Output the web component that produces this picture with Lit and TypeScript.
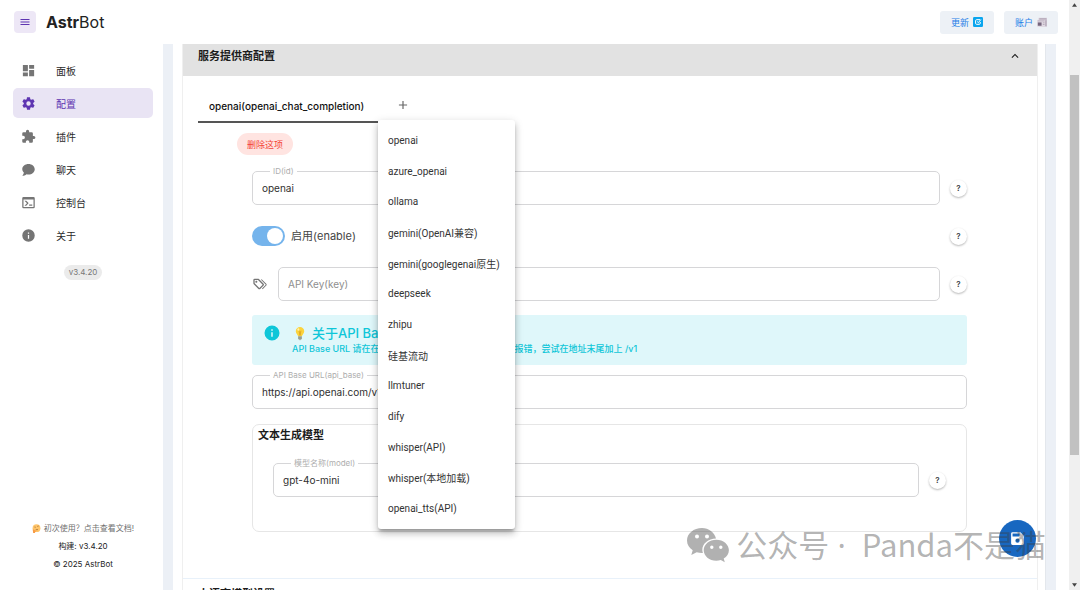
import { LitElement, html, css } from "lit";
import { customElement, property, state } from "lit/decorators.js";
import { classMap } from "lit/directives/class-map.js";

const icons = {
  menu: "M3 6h18v2H3zm0 5h18v2H3zm0 5h18v2H3z",
  dashboard: "M13 3v6h8V3m-8 18h8V11h-8M3 21h8v-6H3m0-2h8V3H3z",
  cog: "M12 15.5A3.5 3.5 0 0 1 8.5 12 3.5 3.5 0 0 1 12 8.5a3.5 3.5 0 0 1 3.5 3.5 3.5 3.5 0 0 1-3.5 3.5m7.43-2.53c.04-.32.07-.64.07-.97s-.03-.66-.07-1l2.11-1.63c.19-.15.24-.42.12-.64l-2-3.46c-.12-.22-.39-.31-.61-.22l-2.49 1c-.52-.39-1.06-.73-1.69-.98l-.37-2.65A.506.506 0 0 0 14 2h-4c-.25 0-.46.18-.5.42l-.37 2.65c-.63.25-1.17.59-1.69.98l-2.49-1c-.22-.09-.49 0-.61.22l-2 3.46c-.13.22-.07.49.12.64L4.57 11c-.04.34-.07.67-.07 1s.03.65.07.97l-2.11 1.66c-.19.15-.25.42-.12.64l2 3.46c.12.22.39.3.61.22l2.49-1.01c.52.4 1.06.74 1.69.99l.37 2.65c.04.24.25.42.5.42h4c.25 0 .46-.18.5-.42l.37-2.65c.63-.26 1.17-.59 1.69-.99l2.49 1.01c.22.08.49 0 .61-.22l2-3.46c.12-.22.07-.49-.12-.64z",
  puzzle: "M20.5 11H19V7a2 2 0 0 0-2-2h-4V3.5A2.5 2.5 0 0 0 10.5 1 2.5 2.5 0 0 0 8 3.500V5H4a2 2 0 0 0-2 2v3.800h1.500c1.500 0 2.700 1.200 2.700 2.700S5 16.200 3.500 16.200H2V20a2 2 0 0 0 2 2h3.800v-1.500c0-1.500 1.200-2.700 2.700-2.700s2.700 1.200 2.700 2.700V22H17a2 2 0 0 0 2-2v-4h1.500a2.500 2.500 0 0 0 2.500-2.500 2.500 2.500 0 0 0-2.500-2.500",
  chat: "M12 3C6.500 3 2 6.580 2 11c.050 2.150 1 4.200 2.500 5.700C4.500 18 3.700 20.100 2 22c2.500 0 5-1 6.900-2.500 1 .3 2 .5 3.100.5 5.500 0 10-3.600 10-8.500S17.500 3 12 3",
  console: "M20 19V7H4v12zm0-16a2 2 0 0 1 2 2v14a2 2 0 0 1-2 2H4a2 2 0 0 1-2-2V5a2 2 0 0 1 2-2zm-7 14v-2h5v2zm-3.420-4L5.570 9H8.400l3.300 3.300c.390.390.390 1.030 0 1.420L8.420 17H5.590z",
  info: "M13 9h-2V7h2m0 10h-2v-6h2m-1-9A10 10 0 0 0 2 12a10 10 0 0 0 10 10 10 10 0 0 0 10-10A10 10 0 0 0 12 2",
  chevronUp: "M7.410 15.410 12 10.830l4.590 4.580L18 14l-6-6-6 6z",
  plus: "M19 13h-6v6h-2v-6H5v-2h6V5h2v6h6z",
  tags: "M6.500 10C7.300 10 8 9.300 8 8.500S7.300 7 6.500 7 5 7.700 5 8.500 5.700 10 6.500 10M9 6l7 7-5 5-7-7V6zm0-2H4a2 2 0 0 0-2 2v5c0 .550.220 1.050.590 1.410l7 7c.360.360.860.590 1.410.590s1.050-.230 1.410-.590l5-5c.370-.360.590-.860.590-1.410s-.230-1.060-.590-1.420l-7-7C10.050 4.220 9.550 4 9 4m4.500 1.700 1-1 6.900 6.900c.4.400.6.900.6 1.400s-.2 1.100-.6 1.400L16 19.800l-1-1 5.700-5.800z",
  save: "M5 3h11l5 5v11a2 2 0 0 1-2 2H5a2 2 0 0 1-2-2V5a2 2 0 0 1 2-2m0 2v4h10V5zm7 7a3 3 0 0 0 0 6 3 3 0 0 0 0-6",
};

const icon = (name: keyof typeof icons) =>
  html`<svg class="icon" viewBox="0 0 24 24" aria-hidden="true"><path fill="currentColor" fill-rule="evenodd" d=${icons[name]}></path></svg>`;

const base = css`
  * { box-sizing: border-box; }
  button, input { font: inherit; color: inherit; }
  button { border: 0; background: none; padding: 0; cursor: pointer; }
  a { color: inherit; text-decoration: none; }
  .icon { display: block; width: 100%; height: 100%; }
`;

@customElement("help-button")
class HelpButton extends LitElement {
  static styles = [base, css`
    :host { display: block; flex: none; }
    .help {
      display: block; width: 17px; height: 17px; border-radius: 50%; background: #fff;
      font-size: 8px; line-height: 17px; font-weight: 600; color: #3f3f46; text-align: center;
      box-shadow: 0 1px 2px rgba(0, 0, 0, .22), 0 1px 3px rgba(0, 0, 0, .08);
    }
  `];
  render() {
    return html`<button class="help" aria-label="帮助">?</button>`;
  }
}

@customElement("outlined-field")
class OutlinedField extends LitElement {
  @property() label = "";
  @property() value = "";
  @property({ type: Boolean }) floating = false;
  static styles = [base, css`
    :host { display: block; flex: 1; min-width: 0; position: relative; }
    .input {
      display: block; width: 100%; height: 34px; padding: 0 9px; border: 1px solid #d6d6d8;
      border-radius: 5px; background: transparent; font-size: 10px; color: #303030; outline: none;
    }
    .input::placeholder { color: #8f8f8f; opacity: 1; font-size: 10px; }
    .label {
      position: absolute; left: 18px; top: -6px; padding: 0 3px; background: #fff;
      font-size: 8px; line-height: 12px; color: #aeaeae;
    }
    .hidden { width: 1px; height: 1px; padding: 0; overflow: hidden; opacity: 0; }
  `];
  render() {
    return html`
      <label for="f" class=${classMap({ label: true, hidden: !this.floating })}>${this.label}</label>
      <input id="f" class="input" .value=${this.value} placeholder=${this.floating ? "" : this.label} />
    `;
  }
}

@customElement("side-nav")
class SideNav extends LitElement {
  @state() current = "配置";
  items: [keyof typeof icons, string][] = [
    ["dashboard", "面板"], ["cog", "配置"], ["puzzle", "插件"],
    ["chat", "聊天"], ["console", "控制台"], ["info", "关于"],
  ];
  static styles = [base, css`
    :host { display: flex; flex-direction: column; flex: none; width: 163px; padding: 11px 10px 19px 13px; }
    .list { display: flex; flex-direction: column; gap: 3px; }
    .item {
      display: flex; align-items: center; gap: 20px; height: 30px; padding: 0 8px;
      border-radius: 5px; font-size: 10px; color: #2b2b2b;
    }
    .active { background: #e9e4f4; color: #5e35b1; }
    .glyph { width: 15px; height: 15px; color: #757575; }
    .active .glyph { color: #5e35b1; }
    .version {
      align-self: center; margin-top: 15px; padding: 0 5px; border-radius: 8px; background: #ebebeb;
      font-size: 8px; line-height: 15px; color: #777;
    }
    .foot {
      margin-top: auto; display: flex; flex-direction: column; align-items: center; gap: 5px;
      font-size: 8px; line-height: 13px; color: #222;
    }
    .docs { display: flex; align-items: center; gap: 3px; color: #6f6f6f; }
    .face { width: 9px; height: 9px; }
  `];
  render() {
    return html`
      <nav class="list">
        ${this.items.map(([glyph, text]) => html`
          <a href="#" class=${classMap({ item: true, active: text === this.current })}
            @click=${(e: Event) => { e.preventDefault(); this.current = text; }}>
            <span class="glyph">${icon(glyph)}</span>${text}
          </a>`)}
      </nav>
      <span class="version">v3.4.20</span>
      <footer class="foot">
        <a class="docs" href="#">
          <svg class="face" viewBox="0 0 12 12" aria-hidden="true">
            <circle cx="6" cy="5.500" r="5.200" fill="#ffc56b"></circle>
            <path d="M3.200 4l1.800.3M7 3.200l2-.6M5 7.500h3" stroke="#9a6428" stroke-width=".9" fill="none"></path>
            <path d="M1 7.500c1.500-.5 2 .5 3 1l2 .3c.6.600-.5 1.200-1.500 1.200l-.6 2H1.500z" fill="#f79b45"></path>
          </svg>初次使用？点击查看文档!</a>
        <span>构建: v3.4.20</span>
        <span>© 2025 AstrBot</span>
      </footer>
    `;
  }
}

@customElement("provider-tabs")
class ProviderTabs extends LitElement {
  providers = [
    "openai", "azure_openai", "ollama", "gemini(OpenAI兼容)", "gemini(googlegenai原生)", "deepseek",
    "zhipu", "硅基流动", "llmtuner", "dify", "whisper(API)", "whisper(本地加载)", "openai_tts(API)",
  ];
  static styles = [base, css`
    :host { display: flex; height: 32px; }
    .tab {
      padding: 0 11px; min-width: 180px; border-bottom: 2px solid #555; font-size: 10px;
      font-weight: 500; color: #111; text-align: left; white-space: nowrap;
    }
    .adder { position: relative; width: 50px; display: flex; justify-content: center; }
    .add { width: 14px; height: 28px; color: #666; }
    .menu {
      position: absolute; z-index: 3; left: 0; top: 29px; width: 137px; height: 409px; padding: 5px 0;
      display: grid; grid-auto-rows: 1fr; background: #fff; border-radius: 3px;
      box-shadow: 0 3px 3px -1px rgba(0, 0, 0, .25), 0 5px 7px rgba(0, 0, 0, .16), 0 2px 10px rgba(0, 0, 0, .14);
    }
    .option {
      padding: 0 10px; text-align: left; white-space: nowrap; color: #333;
      font-family: Roboto, "Noto Sans CJK SC", sans-serif; font-size: 10px;
    }
  `];
  render() {
    return html`
      <button class="tab" role="tab" aria-selected="true">openai(openai_chat_completion)</button>
      <div class="adder">
        <button class="add" aria-label="添加">${icon("plus")}</button>
        <div class="menu" role="menu">
          ${this.providers.map((p) => html`<button class="option" role="menuitem">${p}</button>`)}
        </div>
      </div>
    `;
  }
}

@customElement("provider-form")
class ProviderForm extends LitElement {
  @state() enabled = true;
  static styles = [base, css`
    :host { display: flex; flex-direction: column; padding: 10px 55px 0 54px; }
    .delete {
      align-self: flex-start; margin: 0 0 16px -15px; padding: 0 10px; height: 22px; border-radius: 11px;
      background: #ffe4e1; color: #f44336; font-size: 9px;
    }
    .row { display: flex; align-items: center; height: 34px; margin-bottom: 14px; gap: 10px; }
    .tags { width: 16px; height: 16px; color: #757575; flex: none; }
    .toggle { flex: 1; display: flex; align-items: center; gap: 6px; font-size: 11px; line-height: 16px; color: #444; }
    .switch {
      appearance: none; margin: 0; width: 33px; height: 20px; border-radius: 10px; background: #ccc;
      display: flex; align-items: center; padding: 0 2px;
    }
    .switch:checked { background: #75b4ec; justify-content: flex-end; }
    .switch::before { content: ""; width: 16px; height: 16px; border-radius: 50%; background: #fff; }
    .alert {
      display: flex; gap: 11px; padding: 9px 11px; height: 50px; margin: 0 0 10px; border-radius: 3px;
      background: #dff7fa; color: #0fc6d8; overflow: hidden;
    }
    .mark { width: 18px; height: 18px; flex: none; }
    .body { min-width: 0; }
    .title { display: flex; align-items: center; gap: 4px; margin: 0; font-size: 13px; line-height: 18px; font-weight: 500; }
    .bulb { width: 16px; height: 15px; }
    .text { margin: 0; font-size: 9px; line-height: 14px; font-weight: 500; white-space: nowrap; }
    .base { margin-bottom: 15px; flex: none; }
    .group { height: 108px; border: 1px solid #e6e6e6; border-radius: 7px; padding: 2px 20px 0; }
    .heading { margin: 0 0 20px -15px; font-size: 11px; line-height: 16px; font-weight: 700; color: #1c1c1c; }
  `];
  render() {
    return html`
      <button class="delete">删除这项</button>
      <div class="row">
        <outlined-field floating label="ID(id)" value="openai"></outlined-field><help-button></help-button>
      </div>
      <div class="row">
        <label class="toggle">
          <input class="switch" type="checkbox" role="switch" .checked=${this.enabled}
            @change=${() => (this.enabled = !this.enabled)} />启用(enable)
        </label>
        <help-button></help-button>
      </div>
      <div class="row">
        <span class="tags">${icon("tags")}</span>
        <outlined-field label="API Key(key)"></outlined-field><help-button></help-button>
      </div>
      <section class="alert">
        <span class="mark">${icon("info")}</span>
        <div class="body">
          <h3 class="title">
            <svg class="bulb" viewBox="0 0 16 16" aria-hidden="true">
              <path d="M8 1a4.500 4.500 0 0 0-4.500 4.500C3.500 8 5.700 9 6 11h4c.3-2 2.500-3 2.500-5.500A4.500 4.500 0 0 0 8 1" fill="#fbd33c"></path>
              <path d="M7 5l1 5 1-5" stroke="#d99b1c" stroke-width=".8" fill="none"></path>
              <path d="M6 11h4v3H9l-1 1.500L7 14H6z" fill="#9a9f8e"></path>
              <ellipse cx="6.200" cy="3.800" rx="1" ry="1.300" fill="#fff2ae"></ellipse>
            </svg>
            关于API Base URL
          </h3>
          <p class="text">API Base URL 请在在对应服务商的文档中查看。若请求报错，尝试在地址末尾加上 /v1</p>
        </div>
      </section>
      <outlined-field class="base" floating label="API Base URL(api_base)" value="https://api.openai.com/v1"></outlined-field>
      <section class="group">
        <h3 class="heading">文本生成模型</h3>
        <div class="row">
          <outlined-field floating label="模型名称(model)" value="gpt-4o-mini"></outlined-field><help-button></help-button>
        </div>
      </section>
    `;
  }
}

@customElement("app-root")
class AppRoot extends LitElement {
  static styles = [base, css`
    :host {
      display: flex; height: 100vh; overflow: hidden; position: relative; background: #fff;
      font-family: Inter, "Noto Sans CJK SC", sans-serif; color: #222;
    }
    .page { flex: 1; min-width: 0; display: flex; flex-direction: column; }
    .top { display: flex; align-items: center; flex: none; height: 44px; padding: 0 11px 0 14px; gap: 10px; }
    .burger { width: 22px; height: 22px; padding: 5px; border-radius: 4px; background: #ede7f6; color: #5e35b1; }
    .brand { margin: 0 auto 0 0; font-size: 16px; font-weight: 400; line-height: 22px; }
    .brand b { font-weight: 700; }
    .action {
      display: flex; align-items: center; gap: 4px; height: 23px; padding: 0 11px; border-radius: 3px;
      background: #edf1f6; color: #1e80e8; font-size: 9px;
    }
    .emoji { width: 10px; height: 10px; }
    .columns { flex: 1; min-height: 0; display: flex; }
    .main { flex: 1; min-width: 0; margin-right: 13px; padding: 0 10px; background: #ecf0f6; overflow: hidden; }
    .card { background: #fff; padding: 0 7px 0 9px; height: 100%; border-right: 1px solid #e3e7ec; overflow: hidden; }
    .panel { border: solid #efefef; border-width: 0 1px; }
    .summary {
      display: flex; justify-content: space-between; width: 100%; padding: 4px 15px 12px; background: #e2e2e2;
      font-size: 11px; line-height: 16px; font-weight: 700; color: #1c1c1c; text-align: left;
    }
    .chev { width: 14px; height: 16px; }
    .body { padding: 15px 15px 46px; border-bottom: 1px solid #e8f1fa; }
    .next { background: none; padding-top: 7px; }
    .bar {
      flex: none; width: 11px; background: #f0f0f0; display: flex; flex-direction: column;
      align-items: center; padding: 3px 1px 3px;
    }
    .arrow { width: 5px; height: 4px; flex: none; }
    .track { flex: 1; align-self: stretch; display: grid; grid-template-rows: 68fr 380fr 128fr; }
    .thumb { grid-row: 2; background: #c1c1c1; }
    .save {
      position: absolute; z-index: 4; right: 44px; bottom: 33px; width: 37px; height: 37px; padding: 10px;
      border-radius: 50%; background: #1867c0; color: #fff;
    }
    .mark {
      position: absolute; z-index: 5; right: 34px; bottom: 24px; display: flex; align-items: center; gap: 7px;
      color: rgba(60, 60, 60, .4); font-family: "Noto Sans CJK SC", sans-serif; font-size: 31px;
      line-height: 42px; white-space: pre; pointer-events: none;
    }
    .dot { font-family: "Noto Sans", sans-serif; }
    .wechat { width: 42px; height: 36px; }
  `];
  render() {
    return html`
      <div class="page">
        <header class="top">
          <button class="burger" aria-label="菜单">${icon("menu")}</button>
          <h1 class="brand"><b>Astr</b>Bot</h1>
          <button class="action">更新
            <svg class="emoji" viewBox="0 0 12 12" aria-hidden="true">
              <rect width="12" height="12" rx="1.500" fill="#0aa5ee"></rect>
              <path d="M8.500 3.200H4.400a1.300 1.300 0 0 0-1.300 1.300v3a1.300 1.300 0 0 0 1.300 1.300h3a1.300 1.300 0 0 0 1.300-1.300V6M5 5.500l1.500 1.200L9.500 3" stroke="#fff" stroke-width="1.200" fill="none"></path>
            </svg>
          </button>
          <button class="action">账户
            <svg class="emoji" viewBox="0 0 12 12" aria-hidden="true">
              <path d="M2 1h10v10.500H2z" fill="#cfc5d2"></path>
              <path d="M0 3.500h9.500v8H0z" fill="#e2dbe4"></path>
              <path d="M1 6.500h4.500v4H1z" fill="#75657c"></path>
              <path d="M1 4.700h8M7 7h2M7 9h2M3 2.200h8M10.700 4v7" stroke="#a598aa" stroke-width=".8"></path>
            </svg>
          </button>
        </header>
        <div class="columns">
          <side-nav></side-nav>
          <main class="main">
            <div class="card">
              <section class="panel">
                <button class="summary">服务提供商配置<span class="chev">${icon("chevronUp")}</span></button>
                <div class="body">
                  <provider-tabs></provider-tabs>
                  <provider-form></provider-form>
                </div>
                <button class="summary next">大语言模型设置</button>
              </section>
            </div>
          </main>
        </div>
      </div>
      <div class="bar" aria-hidden="true">
        <svg class="arrow" viewBox="0 0 6 4"><path d="M0 4l3-4 3 4z" fill="#444"></path></svg>
        <div class="track"><div class="thumb"></div></div>
        <svg class="arrow" viewBox="0 0 6 4"><path d="M0 0l3 4 3-4z" fill="#444"></path></svg>
      </div>
      <button class="save" aria-label="保存">${icon("save")}</button>
      <div class="mark">
        <svg class="wechat" viewBox="0 0 42 36" aria-hidden="true">
          <path fill="currentColor" fill-rule="evenodd" d="M15 1C6.700 1 0 6.500 0 13.500c0 4 2.200 7.400 5.700 9.700L4.300 28l5.400-2.800c1.900.5 4 .8 6.200.7A11 11 0 0 1 15.300 23c0-6.500 6-11.500 13.700-11.600C27.500 5.300 21.700 1 15 1M10 7.500a2 2 0 0 1 0 4 2 2 0 0 1 0-4m10 0a2 2 0 0 1 0 4 2 2 0 0 1 0-4"></path>
          <path fill="currentColor" fill-rule="evenodd" d="M29.300 12.700c-7 0-12.600 4.700-12.600 10.500s5.600 10.500 12.600 10.500c1.600 0 3.100-.2 4.500-.7l4 2.300-1.100-3.700c3.200-2 5.200-5 5.200-8.400 0-5.800-5.600-10.500-12.600-10.500m-4.500 5.800a1.700 1.700 0 0 1 0 3.400 1.700 1.700 0 0 1 0-3.400m9 0a1.700 1.700 0 0 1 0 3.400 1.700 1.700 0 0 1 0-3.400"></path>
        </svg>
        <span>公众号<span class="dot"> ·  </span>Panda不是猫</span>
      </div>
    `;
  }
}
